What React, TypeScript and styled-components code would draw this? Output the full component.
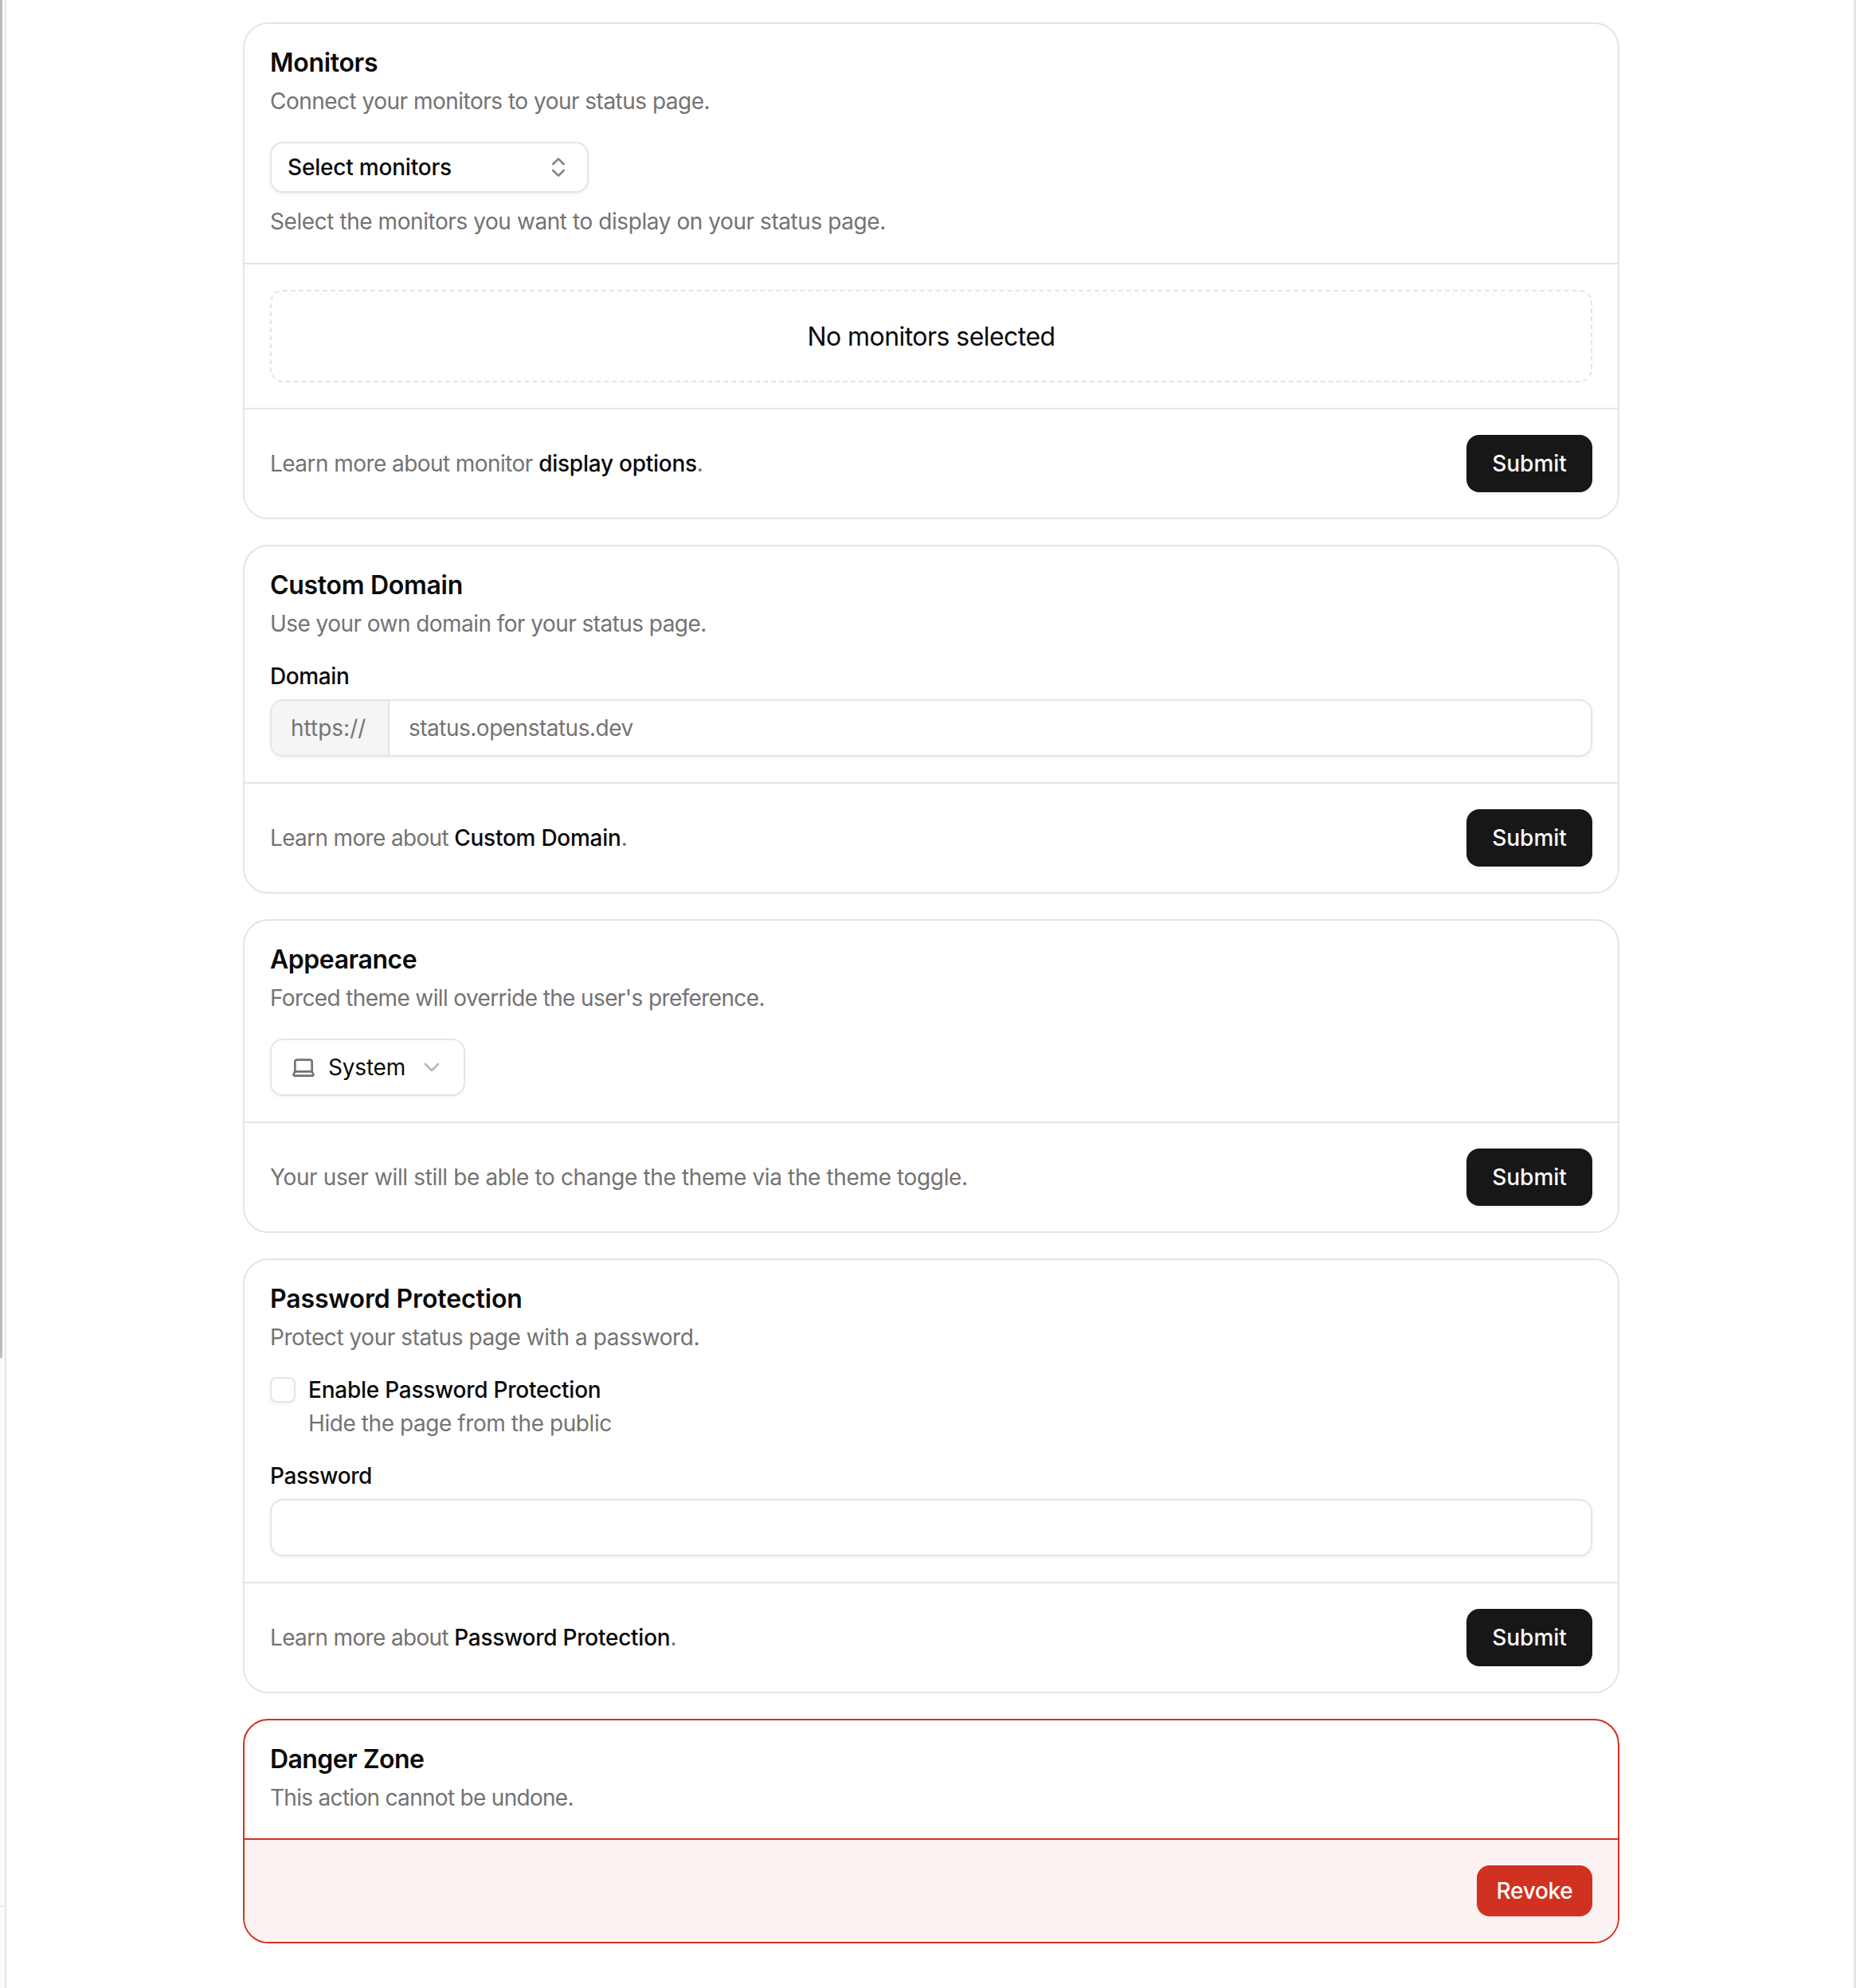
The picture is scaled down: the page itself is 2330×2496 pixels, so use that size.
import React from "react";
import styled, { createGlobalStyle } from "styled-components";
import { ChevronsUpDown, ChevronDown, Laptop } from "lucide-react";

const Global = createGlobalStyle`
  html, body { margin: 0; padding: 0; background: #fff; }
  body { font-family: Inter, "Liberation Sans", sans-serif; color: #0a0a0a; -webkit-font-smoothing: antialiased; }
  * { box-sizing: border-box; }
`;

const Shell = styled.div`
  width: 2330px;
  height: 2496px;
  display: flex;
  overflow: hidden;
  background: #fff;
`;

const SidebarEdge = styled.div`
  position: relative;
  width: 8px;
  flex: none;
  background: #fafafa;
  border-right: 2px solid #e5e5e5;
`;

const ScrollThumb = styled.div`
  position: absolute;
  left: 0;
  top: 0;
  width: 3px;
  height: 1705px;
  background: #bdbdbd;
`;

const SidebarRule = styled.div`
  position: absolute;
  left: 0;
  right: 0;
  top: 2393px;
  height: 1px;
  background: #e5e5e5;
`;

const Main = styled.main`
  flex: 1;
  display: flex;
  flex-direction: column;
  gap: 32px;
  padding: 28px 294px 0 297px;
`;

const RightEdge = styled.div`
  width: 3px;
  flex: none;
  background: #e5e5e5;
`;

const Card = styled.section<{ $danger?: boolean }>`
  border: 2px solid ${(p) => (p.$danger ? "#d13120" : "#e5e5e5")};
  border-radius: 32px;
  overflow: hidden;
  background: #fff;
  > * + * {
    border-top: 2px solid ${(p) => (p.$danger ? "#d13120" : "#e5e5e5")};
  }
`;

const Section = styled.div<{ $h: number }>`
  height: ${(p) => p.$h}px;
  padding: 0 32px;
`;

const Body = styled(Section)`
  padding-top: 29px;
  display: flex;
  flex-direction: column;
`;

const Footer = styled(Section)<{ $danger?: boolean }>`
  display: flex;
  align-items: center;
  justify-content: ${(p) => (p.$danger ? "flex-end" : "space-between")};
  background: ${(p) => (p.$danger ? "#fbf2f1" : "#fff")};
`;

const Title = styled.h2<{ $ls?: number }>`
  margin: 0;
  font-size: 32px;
  line-height: 40px;
  font-weight: 600;
  letter-spacing: ${(p) => p.$ls ?? -0.3}px;
  color: #0a0a0a;
`;

const Muted = styled.p<{ $ls?: number }>`
  margin: 0;
  font-size: 28px;
  line-height: 40px;
  font-weight: 400;
  letter-spacing: ${(p) => p.$ls ?? -0.43}px;
  color: #737373;
`;

const TextLink = styled.a`
  color: #0a0a0a;
  font-weight: 500;
  letter-spacing: -0.25px;
  text-decoration: none;
`;

const Desc = styled(Muted)`
  margin-top: 8px;
`;

const HelpText = styled(Muted)`
  margin-top: 16px;
`;

const SelectButton = styled.button`
  margin-top: 31px;
  width: 400px;
  height: 64px;
  flex: none;
  padding: 0 20px;
  display: flex;
  align-items: center;
  justify-content: space-between;
  background: #fff;
  border: 2px solid #e5e5e5;
  border-radius: 16px;
  box-shadow: 0 2px 4px rgba(0, 0, 0, 0.05);
  font: 500 28px/40px Inter, sans-serif;
  letter-spacing: -0.2px;
  color: #0a0a0a;
`;

const SortIcon = styled(ChevronsUpDown)`
  color: #858585;
  flex: none;
`;

const ThemeButton = styled.button`
  margin-top: 31px;
  align-self: flex-start;
  height: 72px;
  flex: none;
  padding: 0 24px;
  display: flex;
  align-items: center;
  gap: 15px;
  background: #fff;
  border: 2px solid #e5e5e5;
  border-radius: 16px;
  box-shadow: 0 2px 4px rgba(0, 0, 0, 0.05);
  font: 400 28px/40px Inter, sans-serif;
  letter-spacing: -0.2px;
  color: #0a0a0a;
`;

const LaptopIcon = styled(Laptop)`
  color: #737373;
  flex: none;
`;

const ChevronIcon = styled(ChevronDown)`
  color: #b9b9b9;
  flex: none;
  margin-left: 2px;
`;

const EmptyBody = styled(Section)`
  display: flex;
  align-items: center;
`;

const EmptyBox = styled.div`
  width: 100%;
  height: 116px;
  display: flex;
  align-items: center;
  justify-content: center;
  border: 2px dashed #e5e5e5;
  border-radius: 16px;
  font-size: 32px;
  letter-spacing: -0.55px;
  color: #0a0a0a;
`;

const Primary = styled.button`
  height: 72px;
  width: 158px;
  border: none;
  border-radius: 16px;
  background: #171717;
  color: #fafafa;
  font: 500 28px/40px Inter, sans-serif;
  box-shadow: 0 2px 4px rgba(0, 0, 0, 0.05);
`;

const Destructive = styled.button`
  height: 64px;
  width: 145px;
  border: none;
  border-radius: 16px;
  background: #d13120;
  color: #fff;
  font: 500 28px/40px Inter, sans-serif;
  letter-spacing: -0.3px;
  box-shadow: 0 2px 4px rgba(0, 0, 0, 0.05);
`;

const FieldLabel = styled.label`
  display: block;
  margin-top: 32px;
  font-size: 28px;
  line-height: 28px;
  font-weight: 500;
  letter-spacing: -0.4px;
  color: #0a0a0a;
`;

const InputGroup = styled.div`
  margin-top: 15px;
  height: 72px;
  flex: none;
  display: flex;
  border: 2px solid #e5e5e5;
  border-radius: 16px;
  overflow: hidden;
  box-shadow: 0 2px 4px rgba(0, 0, 0, 0.05);
  font-size: 28px;
  color: #737373;
`;

const Prefix = styled.span`
  width: 148px;
  flex: none;
  display: flex;
  align-items: center;
  padding-left: 24px;
  background: #f5f5f5;
  border-right: 2px solid #e5e5e5;
`;

const InputValue = styled.span`
  flex: 1;
  display: flex;
  align-items: center;
  padding-left: 24px;
  letter-spacing: -0.5px;
`;

const CheckRow = styled.div`
  margin-top: 26px;
  display: flex;
  gap: 16px;
`;

const CheckBox = styled.span`
  width: 32px;
  height: 32px;
  margin-top: 4px;
  flex: none;
  background: #fff;
  border: 2px solid #e5e5e5;
  border-radius: 8px;
  box-shadow: 0 2px 4px rgba(0, 0, 0, 0.05);
`;

const CheckText = styled.div`
  display: flex;
  flex-direction: column;
  gap: 2px;
`;

const CheckLabel = styled.span`
  font-size: 28px;
  line-height: 40px;
  font-weight: 500;
  letter-spacing: -0.25px;
`;

const App = () => (
  <Shell>
    <Global />
    <SidebarEdge>
      <ScrollThumb />
      <SidebarRule />
    </SidebarEdge>
    <Main>
      <Card>
        <Body $h={300}>
          <Title>Monitors</Title>
          <Desc $ls={-0.51}>Connect your monitors to your status page.</Desc>
          <SelectButton>
            Select monitors
            <SortIcon size={32} strokeWidth={2} />
          </SelectButton>
          <HelpText>Select the monitors you want to display on your status page.</HelpText>
        </Body>
        <EmptyBody $h={182}>
          <EmptyBox>No monitors selected</EmptyBox>
        </EmptyBody>
        <Footer $h={138}>
          <Muted $ls={-0.56}>
            Learn more about monitor <TextLink>display options</TextLink>.
          </Muted>
          <Primary>Submit</Primary>
        </Footer>
      </Card>
      <Card>
        <Body $h={296}>
          <Title>Custom Domain</Title>
          <Desc $ls={-0.55}>Use your own domain for your status page.</Desc>
          <FieldLabel>Domain</FieldLabel>
          <InputGroup>
            <Prefix>https://</Prefix>
            <InputValue>status.openstatus.dev</InputValue>
          </InputGroup>
        </Body>
        <Footer $h={138}>
          <Muted $ls={-0.66}>
            Learn more about <TextLink>Custom Domain</TextLink>.
          </Muted>
          <Primary>Submit</Primary>
        </Footer>
      </Card>
      <Card>
        <Body $h={252}>
          <Title $ls={-0.45}>Appearance</Title>
          <Desc $ls={-0.62}>Forced theme will override the user's preference.</Desc>
          <ThemeButton>
            <LaptopIcon size={32} strokeWidth={2} />
            System
            <ChevronIcon size={32} strokeWidth={2} />
          </ThemeButton>
        </Body>
        <Footer $h={138}>
          <Muted $ls={-0.37}>Your user will still be able to change the theme via the theme toggle.</Muted>
          <Primary>Submit</Primary>
        </Footer>
      </Card>
      <Card>
        <Body $h={404}>
          <Title $ls={-0.13}>Password Protection</Title>
          <Desc>Protect your status page with a password.</Desc>
          <CheckRow>
            <CheckBox />
            <CheckText>
              <CheckLabel>Enable Password Protection</CheckLabel>
              <Muted>Hide the page from the public</Muted>
            </CheckText>
          </CheckRow>
          <FieldLabel>Password</FieldLabel>
          <InputGroup />
        </Body>
        <Footer $h={138}>
          <Muted $ls={-0.66}>
            Learn more about <TextLink>Password Protection</TextLink>.
          </Muted>
          <Primary>Submit</Primary>
        </Footer>
      </Card>
      <Card $danger>
        <Body $h={148}>
          <Title $ls={-0.58}>Danger Zone</Title>
          <Desc $ls={-0.7}>This action cannot be undone.</Desc>
        </Body>
        <Footer $h={130} $danger>
          <Destructive>Revoke</Destructive>
        </Footer>
      </Card>
    </Main>
    <RightEdge />
  </Shell>
);

export default App;
